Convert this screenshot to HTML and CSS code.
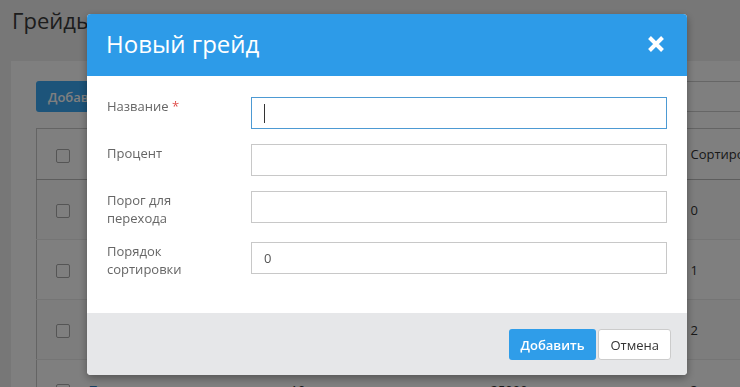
FILE: index.html
```html
<!DOCTYPE html>
<html lang="ru">
<head>
    <meta charset="UTF-8">
    <meta name="viewport" content="width=device-width, initial-scale=1.0">
    <title>Грейды</title>
    <link rel="stylesheet" href="styles.css">
</head>
<body>
    <div class="page">
        <h1 class="page-title">Грейды</h1>

        <div class="panel">
            <div class="toolbar">
                <button class="btn btn-primary">Добавить</button>
                <input class="search" type="text">
            </div>

            <table class="grid">
                <colgroup>
                    <col class="col-check">
                    <col class="col-name">
                    <col class="col-num">
                    <col class="col-num">
                    <col>
                </colgroup>
                <tr>
                    <th><span class="check"></span></th>
                    <th>Название</th>
                    <th>Процент</th>
                    <th>Порог для перехода</th>
                    <th>Сортировка</th>
                </tr>
                <tr>
                    <td><span class="check"></span></td>
                    <td><a href="#">Бронза</a></td>
                    <td>3</td>
                    <td>0</td>
                    <td>0</td>
                </tr>
                <tr>
                    <td><span class="check"></span></td>
                    <td><a href="#">Серебро</a></td>
                    <td>5</td>
                    <td>5000</td>
                    <td>1</td>
                </tr>
                <tr>
                    <td><span class="check"></span></td>
                    <td><a href="#">Золото</a></td>
                    <td>7</td>
                    <td>15000</td>
                    <td>2</td>
                </tr>
                <tr>
                    <td><span class="check"></span></td>
                    <td><a href="#">Платина</a></td>
                    <td>10</td>
                    <td>25000</td>
                    <td>3</td>
                </tr>
            </table>
        </div>
    </div>

    <div class="overlay"></div>

    <div class="modal">
        <div class="modal-header">
            <h2 class="modal-title">Новый грейд</h2>
            <button class="modal-close" aria-label="Закрыть">
                <svg width="18" height="18" viewBox="0 0 18 18">
                    <path d="M2.5 2.5 L15.5 15.5 M15.5 2.5 L2.5 15.5" stroke="#fff" stroke-width="4" stroke-linecap="butt"/>
                </svg>
            </button>
        </div>

        <div class="modal-body">
            <div class="form-row">
                <label class="form-label">Название <span class="req">*</span></label>
                <div class="field">
                    <input class="form-input is-focus" type="text">
                    <span class="caret"></span>
                </div>
            </div>
            <div class="form-row">
                <label class="form-label">Процент</label>
                <div class="field"><input class="form-input" type="text"></div>
            </div>
            <div class="form-row">
                <label class="form-label">Порог для<br>перехода</label>
                <div class="field"><input class="form-input" type="text"></div>
            </div>
            <div class="form-row">
                <label class="form-label">Порядок<br>сортировки</label>
                <div class="field"><input class="form-input" type="text" value="0"></div>
            </div>
        </div>

        <div class="modal-footer">
            <button class="btn btn-primary">Добавить</button>
            <button class="btn btn-default">Отмена</button>
        </div>
    </div>
</body>
</html>
```

FILE: styles.css
```css
html, body { margin: 0; height: 100%; }
body { background: #eeeeee; font-family: "Open Sans", "Liberation Sans", sans-serif; color: #333; overflow: hidden; }
.page { width: 1000px; padding: 5px 0 0 11px; }
.page-title { margin: 0 0 25px 1px; font-size: 22px; font-weight: normal; line-height: 31px; color: #3a3a3a; }

.panel { background: #fff; padding: 20px 25px; }
.toolbar { display: flex; justify-content: space-between; width: 900px; margin-bottom: 16px; }
.search { width: 300px; height: 31px; box-sizing: border-box; border: 1px solid #ccc; }

.btn { height: 31px; padding: 0 11px; border: 1px solid transparent; border-radius: 3px; font-family: inherit; font-size: 13px; cursor: pointer; }
.btn-primary { background-color: #2f9de9; color: #fff; font-weight: 600; }
.toolbar .btn-primary { background-color: #3aa8f4; }
.btn-default { background-color: #fff; color: #333; border-color: #ccc; }

.grid { width: 940px; table-layout: fixed; border-collapse: collapse; border: 1px solid #c8c8c8; font-size: 13px; }
.grid th, .grid td { text-align: left; padding: 0 12px; }
.grid th { height: 50px; font-weight: normal; border-bottom: 1px solid #bbb; }
.grid td { height: 59px; border-top: 1px solid #eaeaea; color: #333; }
.grid tr:nth-child(even) td { background-color: #fbfbfb; }
.grid th:first-child, .grid td:first-child { padding-left: 19px; }
.grid a { color: #2f7fc0; text-decoration: none; }
.col-check { width: 40px; }
.col-name { width: 202px; }
.col-num { width: 200px; }
.check { display: inline-block; width: 12px; height: 12px; border: 1px solid #aaa; border-radius: 2px; vertical-align: middle; background: #fff; }

.overlay { position: fixed; inset: 0; background: rgba(0, 0, 0, 0.5); }

.modal { position: fixed; left: 87px; top: 14px; width: 600px; background: #fff; border-radius: 4px; box-shadow: 0 3px 9px rgba(0, 0, 0, 0.35); overflow: hidden; }
.modal-header { display: flex; align-items: center; justify-content: space-between; background: #2d9be8; padding: 14px 22px 16px 19px; }
.modal-title { margin: 0; font-size: 24px; font-weight: normal; line-height: 32px; color: #fff; }
.modal-close { background: none; border: none; padding: 0; width: 18px; height: 18px; cursor: pointer; display: block; }
.modal-close svg { display: block; }

.modal-body { padding: 21px 20px 20px; }
.form-row { display: grid; grid-template-columns: 144px 1fr; margin-bottom: 15px; }
.form-label { font-size: 13px; line-height: 18px; color: #666; }
.req { color: #e0504d; }
.field { position: relative; }
.form-input { display: block; width: 100%; height: 32px; box-sizing: border-box; border: 1px solid #c8c8c8; padding: 0 12px; font-family: inherit; font-size: 13px; color: #555; outline: none; }
.form-input.is-focus { border-color: #4d9ad3; }
.caret { position: absolute; left: 13px; top: 7px; width: 1px; height: 19px; background: #333; }

.modal-footer { background: #e6e7e9; padding: 16px 16px 15px; display: flex; justify-content: flex-end; gap: 2px; }
```
